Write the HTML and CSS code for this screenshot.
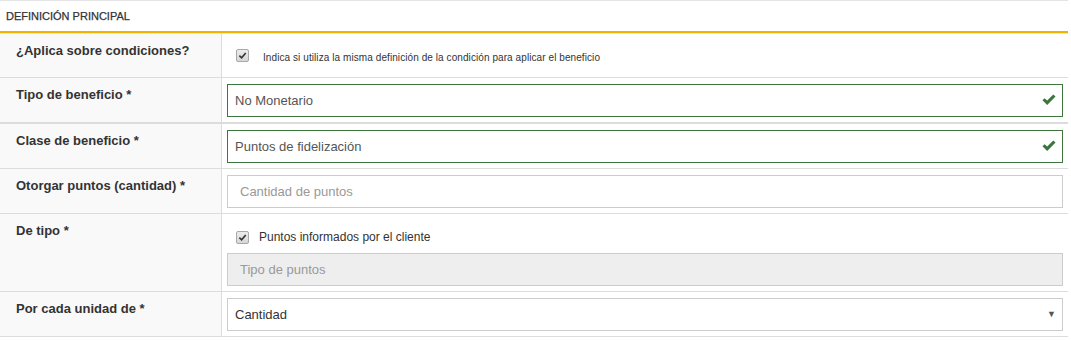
FILE: index.html
```html
<!DOCTYPE html>
<html lang="es">
<head>
<meta charset="utf-8">
<link rel="stylesheet" href="styles.css">
</head>
<body>
<div class="panel">
  <div class="panel-heading">DEFINICIÓN PRINCIPAL</div>
  <table class="form-table">
    <tr class="row-1">
      <th>¿Aplica sobre condiciones?</th>
      <td>
        <label class="check small"><span class="cb"><svg viewBox="0 0 10 10" width="9" height="9"><path d="M1.5 5.2 L4 7.6 L8.6 2.2" fill="none" stroke="#333" stroke-width="1.8"/></svg></span><span>Indica si utiliza la misma definición de la condición para aplicar el beneficio</span></label>
      </td>
    </tr>
    <tr>
      <th>Tipo de beneficio *</th>
      <td>
        <div class="input success">No Monetario<svg class="ok" viewBox="0 0 14 12" width="14" height="12"><path d="M0.5 6.3 L2.6 4.2 L5.2 6.6 L11.3 0.5 L13.5 2.6 L5.2 10.9 Z" fill="#3c763d"/></svg></div>
      </td>
    </tr>
    <tr class="thick">
      <th>Clase de beneficio *</th>
      <td>
        <div class="input success">Puntos de fidelización<svg class="ok" viewBox="0 0 14 12" width="14" height="12"><path d="M0.5 6.3 L2.6 4.2 L5.2 6.6 L11.3 0.5 L13.5 2.6 L5.2 10.9 Z" fill="#3c763d"/></svg></div>
      </td>
    </tr>
    <tr>
      <th>Otorgar puntos (cantidad) *</th>
      <td>
        <div class="input placeholder">Cantidad de puntos</div>
      </td>
    </tr>
    <tr>
      <th>De tipo *</th>
      <td>
        <label class="check normal"><span class="cb"><svg viewBox="0 0 10 10" width="9" height="9"><path d="M1.5 5.2 L4 7.6 L8.6 2.2" fill="none" stroke="#333" stroke-width="1.8"/></svg></span><span>Puntos informados por el cliente</span></label>
        <div class="input placeholder disabled">Tipo de puntos</div>
      </td>
    </tr>
    <tr>
      <th>Por cada unidad de *</th>
      <td>
        <div class="input select">Cantidad<span class="caret">▼</span></div>
      </td>
    </tr>
  </table>
</div>
</body>
</html>
```

FILE: styles.css
```css
html, body {
  margin: 0;
  padding: 0;
  background: #fff;
}
body {
  font-family: "Liberation Sans", Arial, sans-serif;
  color: #333;
}
.panel {
  width: 1068px;
  border-top: 1px solid #e4e4e4;
}
.panel-heading {
  height: 30px;
  line-height: 30px;
  padding-left: 6px;
  font-size: 11px;
  color: #333;
  -webkit-text-stroke: 0.25px #333;
  border-bottom: 2px solid #f0b400;
}
.form-table {
  width: 100%;
  border-collapse: collapse;
  table-layout: fixed;
}
.form-table tr {
  border-bottom: 1px solid #dcdcdc;
}
.form-table tr:first-child {
  border-top: 1px solid #e6e6e6;
}
.form-table tr.thick {
  border-top: 2px solid #dcdcdc;
}
.form-table th {
  width: 205px;
  text-align: left;
  vertical-align: top;
  background: #f9f9f9;
  font-size: 13px;
  font-weight: bold;
  color: #333;
  padding: 9px 0 0 16px;
  border-right: 1px solid #dcdcdc;
}
.form-table td {
  padding: 6px 5px 5px 5px;
  vertical-align: top;
}
.row-1 th {
  height: 34px;
}
.check {
  display: flex;
  align-items: center;
  color: #333;
}
.check .cb {
  width: 11px;
  height: 11px;
  border: 1px solid #a9a9a9;
  border-radius: 2px;
  background: linear-gradient(#ececec, #d6d6d6);
  display: flex;
  align-items: center;
  justify-content: center;
  flex: none;
}
.check.small {
  font-size: 10px;
  letter-spacing: 0.08px;
  margin: 12px 0 0 9px;
}
.check.small .cb {
  margin-right: 14px;
  margin-top: -4px;
}
.check.normal {
  font-size: 12px;
  line-height: 14px;
  margin: 10px 0 9px 9px;
}
.check.normal .cb {
  margin-right: 10px;
}
.input {
  box-sizing: border-box;
  height: 33px;
  border: 1px solid #ccc;
  padding: 0 7px;
  display: flex;
  align-items: center;
  font-size: 13px;
  color: #555;
  position: relative;
}
.input.success {
  border-color: #3c763d;
}
.input.success .ok {
  position: absolute;
  right: 6px;
  top: 9px;
}
.input.placeholder {
  color: #999;
  padding-left: 12px;
}
.input.disabled {
  background: #eee;
}
.input.select {
  padding-left: 7px;
  color: #333;
}
.caret {
  position: absolute;
  right: 6px;
  top: 10px;
  font-size: 9px;
  color: #555;
}
```
